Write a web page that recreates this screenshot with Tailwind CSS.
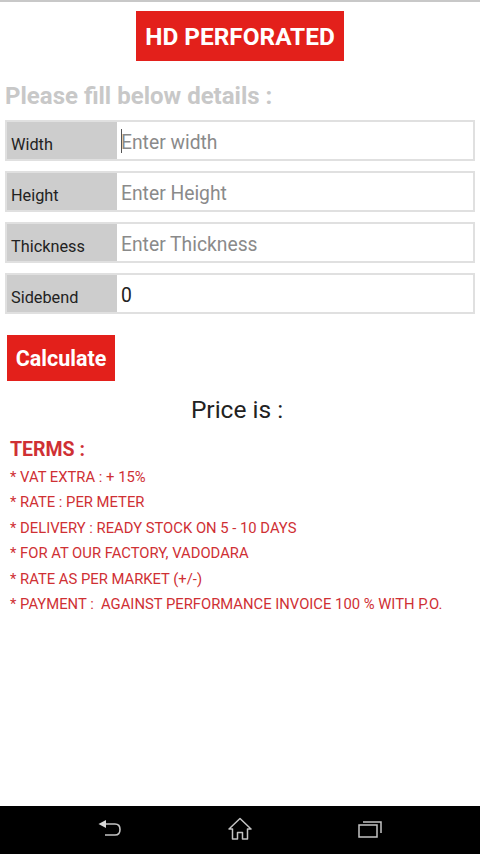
<!DOCTYPE html>
<html lang="en">
<head>
    <meta charset="UTF-8">
    <meta name="viewport" content="width=device-width, initial-scale=1.0">
    <title>HD Perforated</title>
    <script src="https://cdn.jsdelivr.net/npm/@tailwindcss/browser@4"></script>
</head>
<body class="bg-white w-[480px] h-[854px] overflow-hidden flex flex-col font-['Roboto',sans-serif]">
    <div class="h-[2px] bg-[#c8c8c8]"></div>
    <main class="flex-1 flex flex-col px-[5px]">
        <h1 class="self-center mt-[9px] w-[208px] h-[50px] bg-[#e3201b] text-white text-[24.4px] font-bold pt-[3px] flex items-center justify-center">HD PERFORATED</h1>

        <h2 class="mt-[21px] h-[28px] leading-[28px] text-[24px] font-bold text-[#c8c8c8]">Please fill below details :</h2>

        <form class="mt-[10px] flex flex-col gap-[10px] w-[470px]">
            <div class="flex h-[41px] border-2 border-[#e0e0e0]">
                <label class="w-[110px] bg-[#cdcdcd] text-[#222] text-[16.3px] pl-[4px] pt-[11px] leading-[24px]">Width</label>
                <div class="flex-1 flex items-center pl-[4px] pt-[5px] text-[19.3px] text-[#8a8a8a]"><span class="w-px h-[24px] bg-[#555] -mr-px -mt-[5px]"></span>Enter width</div>
            </div>
            <div class="flex h-[41px] border-2 border-[#e0e0e0]">
                <label class="w-[110px] bg-[#cdcdcd] text-[#222] text-[16.3px] pl-[4px] pt-[11px] leading-[24px]">Height</label>
                <div class="flex-1 flex items-center pl-[4px] pt-[5px] text-[19.3px] text-[#8a8a8a]">Enter Height</div>
            </div>
            <div class="flex h-[41px] border-2 border-[#e0e0e0]">
                <label class="w-[110px] bg-[#cdcdcd] text-[#222] text-[16.3px] pl-[4px] pt-[11px] leading-[24px]">Thickness</label>
                <div class="flex-1 flex items-center pl-[4px] pt-[5px] text-[19.3px] text-[#8a8a8a]">Enter Thickness</div>
            </div>
            <div class="flex h-[41px] border-2 border-[#e0e0e0]">
                <label class="w-[110px] bg-[#cdcdcd] text-[#222] text-[16.3px] pl-[4px] pt-[11px] leading-[24px]">Sidebend</label>
                <div class="flex-1 flex items-center pl-[4px] pt-[5px] text-[19.3px] text-[#222]">0</div>
            </div>
        </form>

        <button class="mt-[21px] ml-[2px] w-[108px] h-[46px] bg-[#e3201b] text-white text-[21.5px] font-bold pt-[2px] flex items-center justify-center">Calculate</button>

        <p class="mt-[13px] text-center text-[24.5px] leading-[32px] text-[#222] pr-[6px]">Price is :</p>

        <section class="mt-[11px] pl-[5px] text-[#cf3034]">
            <h3 class="text-[19.5px] font-bold leading-[26px]">TERMS :</h3>
            <ul class="mt-[2px] text-[14.8px] flex flex-col">
                <li class="h-[25.4px] leading-[25px]">* VAT EXTRA : + 15%</li>
                <li class="h-[25.4px] leading-[25px]">* RATE : PER METER</li>
                <li class="h-[25.4px] leading-[25px]">* DELIVERY : READY STOCK ON 5 - 10 DAYS</li>
                <li class="h-[25.4px] leading-[25px]">* FOR AT OUR FACTORY, VADODARA</li>
                <li class="h-[25.4px] leading-[25px]">* RATE AS PER MARKET (+/-)</li>
                <li class="h-[25.4px] leading-[25px] whitespace-pre">* PAYMENT :  AGAINST PERFORMANCE INVOICE 100 % WITH P.O.</li>
            </ul>
        </section>
    </main>

    <nav class="h-[48px] bg-black flex items-center justify-center gap-[106px] shrink-0 pb-[2px]">
        <svg class="w-[24px] h-[20px]" viewBox="0 0 24 20" fill="none" stroke="#c4c4c4" stroke-width="1.6">
            <path d="M6 5 H17 Q22 5 22 10.5 Q22 16 17 16 H7"/>
            <path d="M0.5 5 L8 1 V9 Z" fill="#d8d8d8" stroke="none"/>
        </svg>
        <svg class="w-[24px] h-[24px]" viewBox="0 0 24 24" fill="none" stroke="#c4c4c4" stroke-width="1.5" stroke-linejoin="round">
            <path d="M1 12 L12 1.5 L23 12 L19.5 12 V22 H14.5 V15.5 H9.5 V22 H4.5 V12 Z"/>
        </svg>
        <svg class="w-[24px] h-[18px]" viewBox="0 0 24 18" fill="none" stroke="#c4c4c4" stroke-width="1.5">
            <rect x="1" y="5" width="18" height="12"/>
            <path d="M5 2 H23 V13"/>
        </svg>
    </nav>
</body>
</html>
